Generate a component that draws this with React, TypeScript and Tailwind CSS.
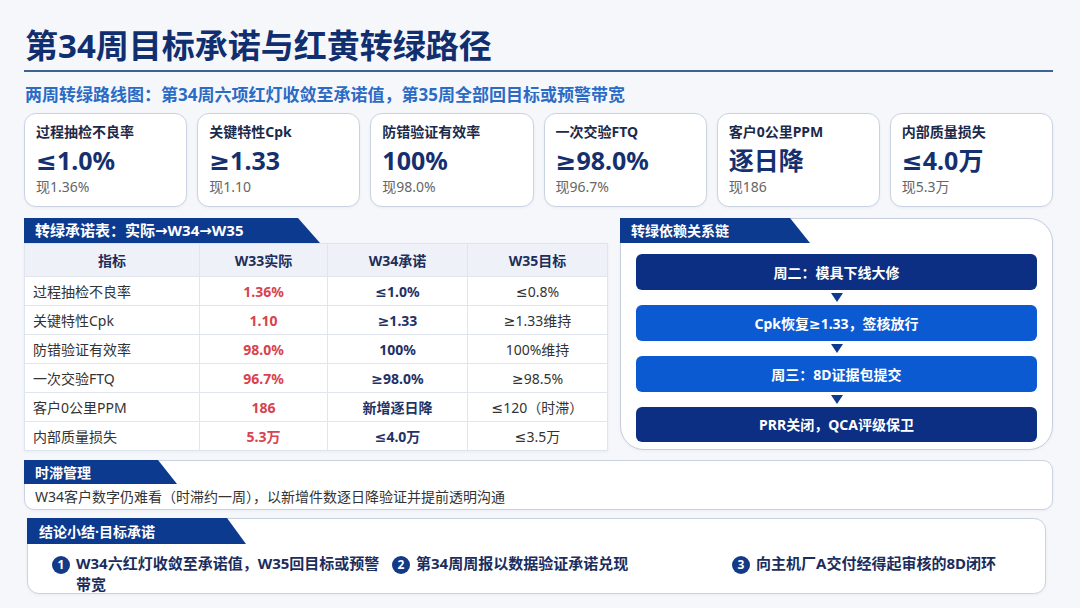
import React from "react";

const kpis = [
  { label: "过程抽检不良率", value: "≤1.0%", now: "现1.36%" },
  { label: "关键特性Cpk", value: "≥1.33", now: "现1.10" },
  { label: "防错验证有效率", value: "100%", now: "现98.0%" },
  { label: "一次交验FTQ", value: "≥98.0%", now: "现96.7%" },
  { label: "客户0公里PPM", value: "逐日降", now: "现186" },
  { label: "内部质量损失", value: "≤4.0万", now: "现5.3万" },
];

const rows = [
  ["过程抽检不良率", "1.36%", "≤1.0%", "≤0.8%"],
  ["关键特性Cpk", "1.10", "≥1.33", "≥1.33维持"],
  ["防错验证有效率", "98.0%", "100%", "100%维持"],
  ["一次交验FTQ", "96.7%", "≥98.0%", "≥98.5%"],
  ["客户0公里PPM", "186", "新增逐日降", "≤120（时滞）"],
  ["内部质量损失", "5.3万", "≤4.0万", "≤3.5万"],
];

const flow = [
  { text: "周二：模具下线大修", dark: true },
  { text: "Cpk恢复≥1.33，签核放行", dark: false },
  { text: "周三：8D证据包提交", dark: false },
  { text: "PRR关闭，QCA评级保卫", dark: true },
];

const items = [
  "W34六红灯收敛至承诺值，W35回目标或预警带宽",
  "第34周周报以数据验证承诺兑现",
  "向主机厂A交付经得起审核的8D闭环",
];

function Arrow() {
  return (
    <div className="h-[15px] flex items-center justify-center">
      <svg width="12" height="9" viewBox="0 0 12 9">
        <polygon points="0,0 12,0 6,9" fill="#0c3a8e" />
      </svg>
    </div>
  );
}

export default function App() {
  return (
    <div
      className="w-[1080px] h-[608px] overflow-hidden bg-[#f5f7fb] pl-[24px] pr-[27px] pt-[25px]"
      style={{ fontFamily: '"Noto Sans", "DejaVu Sans", "Noto Sans CJK SC", sans-serif' }}
    >
      {/* Title */}
      <div className="pl-[1px] text-[33px] leading-[42px] font-bold text-[#112e6e]">
        第34周目标承诺与红黄转绿路径
      </div>
      <div className="mt-[3px] h-[2px] bg-[#3e6292]" />
      <div className="mt-[11px] pl-[1px] text-[17px] leading-[24px] font-bold text-[#2a6bc6]">
        两周转绿路线图：第34周六项红灯收敛至承诺值，第35周全部回目标或预警带宽
      </div>

      {/* KPI cards */}
      <div className="mt-[6px] grid grid-cols-6 gap-[10px]">
        {kpis.map((k) => (
          <div
            key={k.label}
            className="h-[94px] rounded-[12px] border border-[#c9d3e1] bg-white px-[11px] pt-[8px] shadow-[0_1px_3px_rgba(30,60,120,0.06)]"
          >
            <div className="text-[14px] leading-[20px] font-bold text-[#1c2a4a]">{k.label}</div>
            <div className="mt-[3px] text-[25px] leading-[30px] font-bold text-[#15306e]">{k.value}</div>
            <div className="mt-[2px] text-[14px] leading-[20px] text-[#666666]">{k.now}</div>
          </div>
        ))}
      </div>

      {/* Middle section */}
      <div className="mt-[11px] flex gap-[12px]">
        {/* Table */}
        <div className="w-[584px] flex flex-col">
          <div className="w-[296px] h-[25px] bg-[#0c3a8e] [clip-path:polygon(0_0,274px_0,100%_100%,0_100%)] pl-[11px] flex items-center text-white text-[15px] font-bold">
            转绿承诺表：实际→W34→W35
          </div>
          <div className="border border-[#dfe5ee] bg-white shadow-[0_1px_3px_rgba(30,60,120,0.06)]">
            <div className="grid grid-cols-[175px_128px_140px_1fr] h-[32px] bg-[#eef2f8] text-[14px] font-bold text-[#1e2e5a]">
              <div className="flex items-center justify-center border-r border-[#dfe5ee]">指标</div>
              <div className="flex items-center justify-center border-r border-[#dfe5ee]">W33实际</div>
              <div className="flex items-center justify-center border-r border-[#dfe5ee]">W34承诺</div>
              <div className="flex items-center justify-center">W35目标</div>
            </div>
            {rows.map((r) => (
              <div
                key={r[0]}
                className="grid grid-cols-[175px_128px_140px_1fr] h-[29px] border-t border-[#e1e6ee] text-[14px]"
              >
                <div className="flex items-center pl-[8px] text-[#333333] border-r border-[#e1e6ee]">{r[0]}</div>
                <div className="flex items-center justify-center font-bold text-[#d8434f] border-r border-[#e1e6ee]">{r[1]}</div>
                <div className="flex items-center justify-center font-bold text-[#1f3266] border-r border-[#e1e6ee]">{r[2]}</div>
                <div className="flex items-center justify-center text-[#333333]">{r[3]}</div>
              </div>
            ))}
          </div>
        </div>

        {/* Dependency chain */}
        <div className="relative w-[433px] h-[232px] rounded-[24px] border border-[#c5cfdd] bg-white shadow-[0_1px_3px_rgba(30,60,120,0.06)]">
          <div className="absolute left-[-1px] top-[-1px] w-[190px] h-[25px] bg-[#0c3a8e] [clip-path:polygon(0_0,170px_0,100%_100%,0_100%)] pl-[11px] flex items-center text-white text-[14px] font-bold">
            转绿依赖关系链
          </div>
          <div className="mt-[35px] mx-[15px] flex flex-col">
            {flow.map((f, i) => (
              <React.Fragment key={f.text}>
                {i > 0 && <Arrow />}
                <div
                  className={`${i === 3 ? "h-[35px]" : "h-[36px]"} rounded-[6px] flex items-center justify-center text-white text-[14px] font-bold ${
                    f.dark ? "bg-[#0c2f84]" : "bg-[#0c5ad2]"
                  }`}
                >
                  {f.text}
                </div>
              </React.Fragment>
            ))}
          </div>
        </div>
      </div>

      {/* 时滞管理 */}
      <div className="mt-[9px] relative h-[50px] rounded-[10px] border border-[#c9d3e1] bg-white shadow-[0_1px_3px_rgba(30,60,120,0.06)]">
        <div className="absolute left-[-1px] top-[-1px] w-[153px] h-[24px] bg-[#0c3a8e] [clip-path:polygon(0_0,134px_0,100%_100%,0_100%)] pl-[11px] flex items-center text-white text-[14px] font-bold">
          时滞管理
        </div>
        <div className="pt-[26px] pl-[10px] text-[14px] leading-[20px] text-[#333333]">
          W34客户数字仍难看（时滞约一周），以新增件数逐日降验证并提前透明沟通
        </div>
      </div>

      {/* 结论小结 */}
      <div className="mt-[8px] ml-[3px] mr-[7px] relative h-[76px] rounded-[12px] border border-[#c9d3e1] bg-white shadow-[0_1px_3px_rgba(30,60,120,0.06)]">
        <div className="absolute left-[-1px] top-[-1px] w-[219px] h-[26px] bg-[#0c3a8e] [clip-path:polygon(0_0,200px_0,100%_100%,0_100%)] pl-[12px] flex items-center text-white text-[14px] font-bold">
          结论小结·目标承诺
        </div>
        <div className="pt-[34px] pl-[24px] flex">
          {items.map((t, i) => (
            <div key={t} className={`${i < 2 ? "w-[340px]" : ""} shrink-0 flex items-start gap-[6px]`}>
              <div className="mt-[3px] w-[18px] h-[18px] shrink-0 rounded-full bg-[#123a87] flex items-center justify-center text-white text-[12px] font-bold leading-none">
                {i + 1}
              </div>
              <div className="max-w-[310px] text-[15px] leading-[21px] font-bold text-[#1a2d5c]">{t}</div>
            </div>
          ))}
        </div>
      </div>
    </div>
  );
}
